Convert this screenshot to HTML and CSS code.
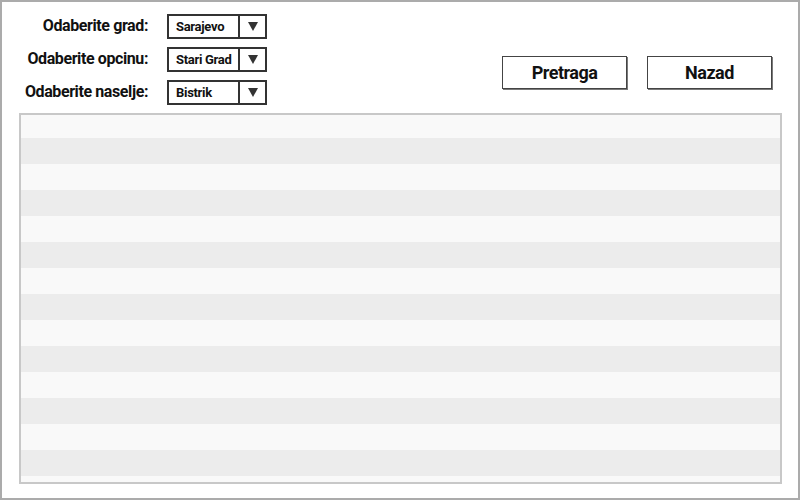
FILE: index.html
```html
<!DOCTYPE html>
<html>
<head>
<meta charset="utf-8">
<link rel="stylesheet" href="styles.css">
</head>
<body>
<div class="frame">
  <div class="top">
    <div class="form">
      <label class="lbl">Odaberite grad:</label>
      <div class="select"><span class="val">Sarajevo</span><span class="arrow"><i class="tri"></i></span></div>
      <label class="lbl">Odaberite opcinu:</label>
      <div class="select"><span class="val">Stari Grad</span><span class="arrow"><i class="tri"></i></span></div>
      <label class="lbl">Odaberite naselje:</label>
      <div class="select"><span class="val">Bistrik</span><span class="arrow"><i class="tri"></i></span></div>
    </div>
    <div class="buttons">
      <div class="btn">Pretraga</div>
      <div class="btn">Nazad</div>
    </div>
  </div>
  <div class="table"></div>
</div>
</body>
</html>
```
FILE: styles.css
```css
html, body {
  margin: 0;
  padding: 0;
  background: #fff;
}
.frame {
  width: 800px;
  height: 500px;
  box-sizing: border-box;
  border: 2px solid #ababab;
  padding-top: 12px;
  font-family: Roboto, "Liberation Sans", sans-serif;
  color: #111;
}
.top {
  display: flex;
  justify-content: space-between;
  align-items: flex-start;
}
.form {
  display: grid;
  grid-template-columns: 146px 100px;
  grid-auto-rows: 25px;
  column-gap: 19px;
  row-gap: 8px;
}
.lbl {
  text-align: right;
  font-weight: bold;
  font-size: 16px;
  letter-spacing: -0.4px;
  line-height: 24px;
  white-space: nowrap;
}
.select {
  box-sizing: border-box;
  border: 2px solid #333;
  display: flex;
  background: #fff;
}
.val {
  flex: 1;
  font-weight: bold;
  font-size: 13px;
  letter-spacing: -0.3px;
  line-height: 21px;
  padding-left: 7px;
  white-space: nowrap;
}
.arrow {
  width: 25px;
  border-left: 2px solid #333;
  display: flex;
  align-items: center;
  justify-content: center;
}
.tri {
  width: 0;
  height: 0;
  border-left: 5.5px solid transparent;
  border-right: 5.5px solid transparent;
  border-top: 9px solid #333;
}
.buttons {
  display: flex;
  gap: 20px;
  margin-top: 42px;
  margin-right: 26px;
}
.btn {
  box-sizing: border-box;
  width: 125px;
  height: 33px;
  border: 1px solid #444;
  box-shadow: 1px 1px 0 #7a7a7a;
  text-align: center;
  font-weight: bold;
  font-size: 18px;
  letter-spacing: -0.5px;
  line-height: 31px;
}
.table {
  box-sizing: border-box;
  margin: 8px 0 0 17px;
  width: 763px;
  height: 371px;
  border: 2px solid #c8c8c8;
  background: repeating-linear-gradient(to bottom, #f9f9f9 0 26px, #ececec 26px 52px);
  background-position: 0 -3px;
}
```
